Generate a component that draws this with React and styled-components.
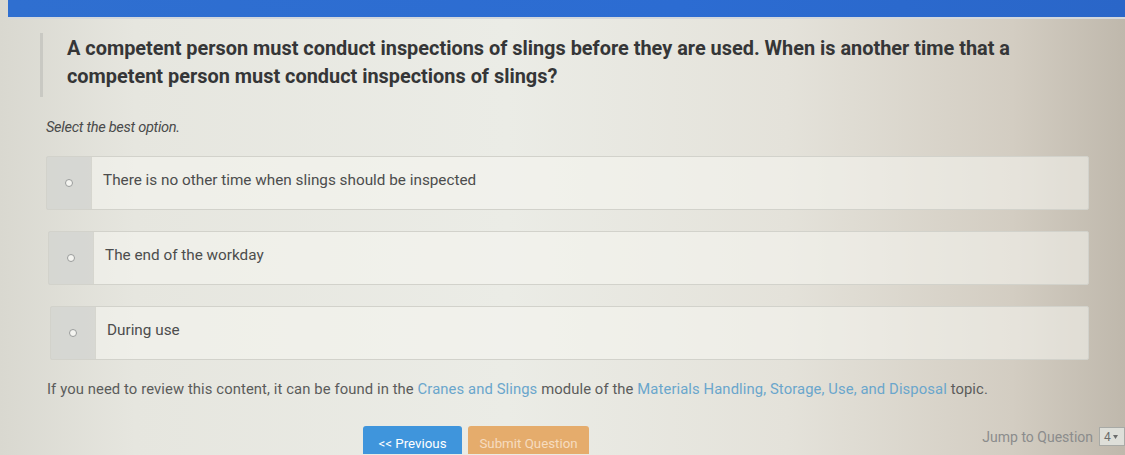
import React from "react";
import styled, { createGlobalStyle } from "styled-components";

const GlobalStyle = createGlobalStyle`
  html, body {
    margin: 0;
    padding: 0;
  }
  body {
    width: 1125px;
    height: 455px;
    overflow: hidden;
    font-family: Roboto, "Liberation Sans", sans-serif;
    background: linear-gradient(
      90deg,
      #d9d8d0 0%,
      #e6e6df 12%,
      #ebece6 45%,
      #e4e2da 70%,
      #d3cdc2 90%,
      #bfb8ac 100%
    );
  }
`;

const Page = styled.div`
  display: flex;
  flex-direction: column;
  height: 455px;
`;

const TopBar = styled.div`
  flex-shrink: 0;
  height: 17px;
  margin-left: 8px;
  background: linear-gradient(90deg, #2f6fd0, #2c6cd2 60%, #2a66c8);
  border-bottom: 2px solid #d4d8dc;
`;

const Content = styled.div`
  display: flex;
  flex-direction: column;
  padding: 14px 36px 0 46px;
`;

const Question = styled.div`
  max-width: 960px;
  margin-left: -6px;
  border-left: 3px solid #c9c9c3;
  padding: 2px 0 6px 24px;
  font-size: 19.9px;
  font-weight: 700;
  line-height: 28px;
  color: #353637;
`;

const Hint = styled.div`
  margin-top: 21px;
  font-size: 14.6px;
  font-style: italic;
  color: #4a4b4b;
  letter-spacing: -0.3px;
`;

const Options = styled.div`
  display: flex;
  flex-direction: column;
  gap: 21px;
  margin-top: 20px;
`;

const Option = styled.label`
  display: flex;
  height: 52px;
  margin-left: ${({ $indent }) => $indent}px;
  background: rgba(246, 246, 240, 0.55);
  border: 1px solid #d2d2cb;
  border-radius: 2px;
  cursor: pointer;
`;

const RadioCell = styled.div`
  width: 44px;
  display: flex;
  align-items: center;
  justify-content: center;
  background: rgba(200, 202, 198, 0.6);
  border-right: 1px solid #d6d6cf;
`;

const Radio = styled.span`
  width: 6px;
  height: 6px;
  border-radius: 50%;
  border: 1.5px solid #9a9c9b;
  background: #f4f4f0;
`;

const OptionText = styled.div`
  display: flex;
  align-items: center;
  padding-left: 11px;
  padding-bottom: 6px;
  font-size: 15.3px;
  color: #4c4d4d;
`;

const Review = styled.div`
  margin-top: 20px;
  margin-left: 1px;
  font-size: 14.8px;
  color: #5b5c5b;
  letter-spacing: 0.1px;
`;

const Link = styled.span`
  color: #6aa6cc;
`;

const Footer = styled.div`
  display: flex;
  align-items: flex-end;
  margin-top: 28px;
  padding-left: 317px;
`;

const Button = styled.button`
  flex-shrink: 0;
  height: 28px;
  width: ${({ $w }) => $w}px;
  margin-right: 6px;
  border: none;
  border-radius: 3px 3px 0 0;
  font-family: Roboto, "Liberation Sans", sans-serif;
  font-size: 13.3px;
  color: ${({ $muted }) => ($muted ? "#f6dcc0" : "#ffffff")};
  background: ${({ $bg }) => $bg};
  padding-top: 8px;
`;

const Jump = styled.div`
  margin-left: auto;
  display: flex;
  align-items: center;
  gap: 6px;
  margin-right: -36px;
  padding-bottom: 8px;
  font-size: 14px;
  color: #8b8c8c;
  white-space: nowrap;
`;

const Select = styled.div`
  width: 20px;
  height: 17px;
  border: 1px solid #a8aaa6;
  background: #dedfd9;
  display: flex;
  align-items: center;
  padding-left: 4px;
  gap: 2px;
  font-size: 12px;
  color: #6c6d6c;
`;

const options = [
  { text: "There is no other time when slings should be inspected", indent: 0 },
  { text: "The end of the workday", indent: 2 },
  { text: "During use", indent: 4 },
];

export default function App() {
  return (
    <Page>
      <GlobalStyle />
      <TopBar />
      <Content>
        <Question>
          A competent person must conduct inspections of slings before they are used. When is another time that a
          competent person must conduct inspections of slings?
        </Question>
        <Hint>Select the best option.</Hint>
        <Options>
          {options.map((o) => (
            <Option key={o.text} $indent={o.indent}>
              <RadioCell>
                <Radio />
              </RadioCell>
              <OptionText>{o.text}</OptionText>
            </Option>
          ))}
        </Options>
        <Review>
          If you need to review this content, it can be found in the <Link>Cranes and Slings</Link> module of the{" "}
          <Link>Materials Handling, Storage, Use, and Disposal</Link> topic.
        </Review>
        <Footer>
          <Button $w={99} $bg="#3f95dc">&lt;&lt; Previous</Button>
          <Button $w={121} $bg="#e5ac6c" $muted>Submit Question</Button>
          <Jump>
            Jump to Question
            <Select>
              4
              <svg width="5" height="4" viewBox="0 0 5 4">
                <path d="M0 0 L5 0 L2.5 4 Z" fill="#6c6d6c" />
              </svg>
            </Select>
          </Jump>
        </Footer>
      </Content>
    </Page>
  );
}
